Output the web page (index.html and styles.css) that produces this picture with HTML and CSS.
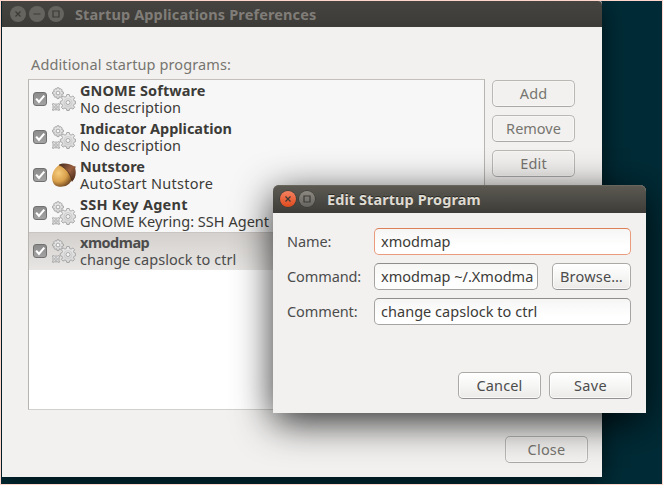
FILE: index.html
```html
<!DOCTYPE html>
<html lang="en">
<head>
<meta charset="utf-8">
<title>Startup Applications Preferences</title>
<link rel="stylesheet" href="styles.css">
</head>
<body>
<svg width="0" height="0" class="defs" aria-hidden="true">
  <defs>
    <linearGradient id="metal" x1="0" y1="0" x2="0" y2="1"><stop offset="0" stop-color="#eaeaea"/><stop offset="1" stop-color="#d6d6d6"/></linearGradient>
    <radialGradient id="nut" cx=".3" cy=".4" r=".75"><stop offset="0" stop-color="#f6cc7c"/><stop offset=".5" stop-color="#d9a04c"/><stop offset="1" stop-color="#4f2b12"/></radialGradient>
    <linearGradient id="cap" x1="0" y1="0" x2="1" y2="1"><stop offset="0" stop-color="#40281c"/><stop offset=".5" stop-color="#9a6040"/><stop offset="1" stop-color="#3b2014"/></linearGradient>
    <symbol id="gears" viewBox="0 0 24 24">
      <g fill="url(#metal)" stroke="#a0a0a0" stroke-width=".9">
        <path d="M5 .8h2l.4 1.4 1.500-.5 1.300 1.300-.5 1.500 1.700.5v2l-1.700.5.5 1.500-1.300 1.300-1.500-.5-.4 1.800H5l-.5-1.800-1.500.5L1.700 9l.6-1.500L.6 7V5l1.700-.5-.6-1.500L3 1.700l1.500.5z"/>
        <path d="M14.800 7.500h2.400l.5 2 1.400.6 1.800-1.100 1.700 1.700-1.100 1.800.6 1.400 1.500.4v2.400l-1.500.5-.6 1.400 1.100 1.800-1.700 1.700-1.800-1.100-1.400.6-.5 1.900h-2.400l-.5-1.900-1.400-.6-1.800 1.100-1.700-1.700 1.100-1.800-.6-1.400-1.600-.5v-2.400l1.600-.4.6-1.400L9.400 10.700 11.100 9l1.800 1.100 1.400-.6z"/>
        <path d="M.8 16.500l1.500.6h3.400l1.500-.6.500.6-.7 1.500v2.800l.7 1.500-.5.600-1.500-.7H2.300l-1.500.7-.5-.6.700-1.500v-2.800l-.7-1.500z"/>
        <circle cx="16" cy="15.500" r="4" fill="none" stroke="#c4c4c4" stroke-width=".7"/>
        <circle cx="6" cy="6" r="1.900" fill="#f7f7f7"/>
        <circle cx="16" cy="15.500" r="2" fill="#f7f7f7"/>
        <circle cx="4" cy="20" r="1.300" fill="#f7f7f7"/>
      </g>
    </symbol>
    <symbol id="acorn" viewBox="0 0 24 24">
      <path d="M9 1C3.500 3.500 0 9 0 15c.2 3 1.500 6.500 3.500 7.500 3 1.600 8 1.800 11.500-.2 3-1.500 7-7 7-12z" fill="url(#nut)"/>
      <path d="M7 1.800C10-.4 18 .2 21.500 3l2.300.6-.6 2C24.500 10 23.500 15.500 20 18.500 19 11.500 14.500 5 7 1.800z" fill="url(#cap)"/>
      <path d="M7 1.900C14.500 5 19 11.500 20 18.500" fill="none" stroke="#4a2b1b" stroke-width=".8"/>
    </symbol>
    <symbol id="close" viewBox="0 0 16 16"><path d="M5.500 5.500l5 5m0-5l-5 5" fill="none" stroke="#3c3a36" stroke-width="1.200"/></symbol>
    <symbol id="min" viewBox="0 0 16 16"><path d="M4.500 8h7" fill="none" stroke="#3c3a36" stroke-width="1.200"/></symbol>
    <symbol id="max" viewBox="0 0 16 16"><path d="M5 5h6v6H5z" fill="none" stroke="#3c3a36" stroke-width="1.200"/></symbol>
    <symbol id="check" viewBox="0 0 14 14"><path d="M2.500 6.500l3.300 4L12 3" fill="none" stroke="#fff" stroke-width="2.400"/></symbol>
  </defs>
</svg>
<div class="desktop">
  <section class="window prefs">
    <header class="titlebar">
      <svg class="ctl"><use href="#close"/></svg><svg class="ctl"><use href="#min"/></svg><svg class="ctl"><use href="#max"/></svg>
      <h1 class="title t-prefs">Startup Applications Preferences</h1>
    </header>
    <div class="prefs-body">
      <p class="caption"><span class="t-caption">Additional startup programs:</span></p>
      <div class="columns">
        <ul class="list">
          <li class="row"><svg class="check"><use href="#check"/></svg><svg class="icon"><use href="#gears"/></svg><div class="text"><b class="t-gnome">GNOME Software</b><span class="t-nodesc">No description</span></div></li>
          <li class="row"><svg class="check"><use href="#check"/></svg><svg class="icon"><use href="#gears"/></svg><div class="text"><b class="t-indicator">Indicator Application</b><span class="t-nodesc">No description</span></div></li>
          <li class="row"><svg class="check"><use href="#check"/></svg><svg class="icon"><use href="#acorn"/></svg><div class="text"><b>Nutstore</b><span class="t-auto">AutoStart Nutstore</span></div></li>
          <li class="row"><svg class="check"><use href="#check"/></svg><svg class="icon"><use href="#gears"/></svg><div class="text"><b class="t-ssh">SSH Key Agent</b><span class="t-keyring">GNOME Keyring: SSH Agent</span></div></li>
          <li class="row selected"><svg class="check"><use href="#check"/></svg><svg class="icon"><use href="#gears"/></svg><div class="text"><b class="t-xmod">xmodmap</b><span class="t-change">change capslock to ctrl</span></div></li>
        </ul>
        <div class="side">
          <button class="btn dim t-add">Add</button>
          <button class="btn dim">Remove</button>
          <button class="btn dim t-add">Edit</button>
        </div>
      </div>
      <div class="footer"><button class="btn dim t-close">Close</button></div>
    </div>
  </section>

  <section class="window dialog">
    <header class="titlebar">
      <svg class="ctl hot"><use href="#close"/></svg><svg class="ctl"><use href="#max"/></svg>
      <h2 class="title t-edit">Edit Startup Program</h2>
    </header>
    <div class="form">
      <div class="field"><span class="label t-label">Name:</span><div class="entry focus">xmodmap</div></div>
      <div class="field"><span class="label t-label">Command:</span><div class="entry">xmodmap ~/.Xmodma</div><button class="btn browse">Browse…</button></div>
      <div class="field"><span class="label t-label">Comment:</span><div class="entry t-change">change capslock to ctrl</div></div>
    </div>
    <div class="actions"><button class="btn t-add">Cancel</button><button class="btn t-save">Save</button></div>
  </section>
</div>
</body>
</html>
```
FILE: styles.css
```css
* { box-sizing: border-box; }
html, body { margin: 0; height: 100%; overflow: hidden; }
body { font: 14.5px/17px "Noto Sans", "Open Sans", sans-serif; color: #3c3b37; }
.defs { position: absolute; }
.desktop {
  position: relative; width: 663px; height: 485px; overflow: hidden;
  background: #002b36; border: 1px solid #ffd6cb;
}
.window { position: absolute; display: flex; flex-direction: column; background: #f2f1f0; }
.prefs { left: 1px; top: 0; width: 600px; height: 476px; border-radius: 0 4px 0 0; box-shadow: 0 -1px 0 #b1b8b8, 0 5px 24px rgba(0,0,0,.6); }
.dialog { left: 272px; top: 184px; width: 373px; height: 228px; border-radius: 6px 6px 0 0; box-shadow: 0 9px 38px rgba(0,0,0,.82); }

.titlebar { display: flex; align-items: center; gap: 3px; height: 26px; padding: 0 8px; background: linear-gradient(#454440, #3c3b37); border-radius: inherit; }
.dialog .titlebar { height: 28px; background: linear-gradient(#5c5a52, #3d3c38); box-shadow: inset 0 1px #68665c; padding-left: 7px; }
.title { margin: -1px 0 0 8px; font-size: 14.5px; line-height: 20px; font-weight: 700; color: #807d78; white-space: nowrap; }
.dialog .title { color: #dfdbd2; text-shadow: 0 -1px #292824; margin-left: 9px; }
.ctl { width: 16px; height: 16px; border-radius: 50%; background: #65645f; flex: none; }
.dialog .ctl { background: linear-gradient(#8b8981, #66645e); box-shadow: 0 0 0 .5px #33322e; }
.dialog .ctl.hot { background: linear-gradient(#f58260, #df4a1d); }

.prefs-body { display: flex; flex-direction: column; padding: 28px 27px 14px 26px; flex: 1; }
.caption { margin: 0 0 0 3px; height: 24px; line-height: 18px; color: #77756f; }
.columns { display: flex; gap: 7px; }
.list { width: 457px; height: 331px; margin: 0; padding: 0; list-style: none; background: #fff; border: 1px solid #b8b5b0; border-bottom-color: #d0d0cc; border-top-color: #c4c1bd; }
.row { display: flex; align-items: center; height: 38px; padding-left: 4px; background: #f7f7f7; white-space: nowrap; }
.row.selected { background: linear-gradient(#d3d0cd, #e8e6e4); color: #4c4c4c; box-shadow: inset 0 1px #c8c5c2; }
.check { width: 14px; height: 14px; border: 1px solid #707070; border-radius: 3px; background: linear-gradient(#8b8b8b, #a3a3a3); margin-right: 5px; }
.icon { width: 24px; height: 24px; margin-right: 4px; }
.text { display: flex; flex-direction: column; }
.text > * { height: 17px; width: max-content; }
.side { display: flex; flex-direction: column; gap: 8px; padding-top: 1px; }
.btn {
  width: 83px; height: 27px; padding: 0 0 1px; font: inherit; color: #4c4c4c;
  border: 1px solid #aaa9a6; border-bottom-color: #929292; border-radius: 5px;
  background: linear-gradient(#fff, #f6f6f5 50%, #ebeae9); box-shadow: inset 0 0 0 1px rgba(255,255,255,.7);
}
.btn.dim { color: #77756f; background: #f2f1f0; border-color: #b9b8b5; border-bottom-color: #aaa; box-shadow: inset 0 0 0 1px #f7f6f5; }
.footer { display: flex; justify-content: flex-end; margin: 26px -13px 0 0; }

.form { display: flex; flex-direction: column; gap: 8px; padding: 15px 15px 0 14px; }
.field { display: flex; height: 27px; }
.label { width: 87px; line-height: 26px; color: #4c4c4c; }
.entry { flex: 1; min-width: 0; padding-left: 6px; line-height: 25px; overflow: hidden; white-space: nowrap; background: linear-gradient(#f6f6f5, #fff 70%); border: 1px solid #a5a4a2; border-top-color: #8e8d8b; border-radius: 5px; }
.entry.focus { border-color: #e99b7c; border-top-color: #dd7f58; }
.browse { width: 79px; margin-left: 14px; letter-spacing: .2px; }
.actions { display: flex; justify-content: flex-end; gap: 8px; margin: auto 14px 14px 0; }

/* tracking per label */
.t-prefs { letter-spacing: .13px; }
.t-caption { letter-spacing: .11px; }
.t-gnome { letter-spacing: .1px; }
.t-nodesc { letter-spacing: .08px; }
.t-indicator { letter-spacing: -.03px; }
.t-auto { letter-spacing: .25px; }
.t-ssh { letter-spacing: .25px; }
.t-keyring { letter-spacing: .03px; }
.t-xmod { letter-spacing: -.5px; }
.t-change { letter-spacing: .03px; }
.t-edit { letter-spacing: .07px; }
.t-label { letter-spacing: -.1px; }
.t-add { letter-spacing: .15px; }
.t-save { letter-spacing: .4px; }
.t-close { letter-spacing: .2px; }
```
